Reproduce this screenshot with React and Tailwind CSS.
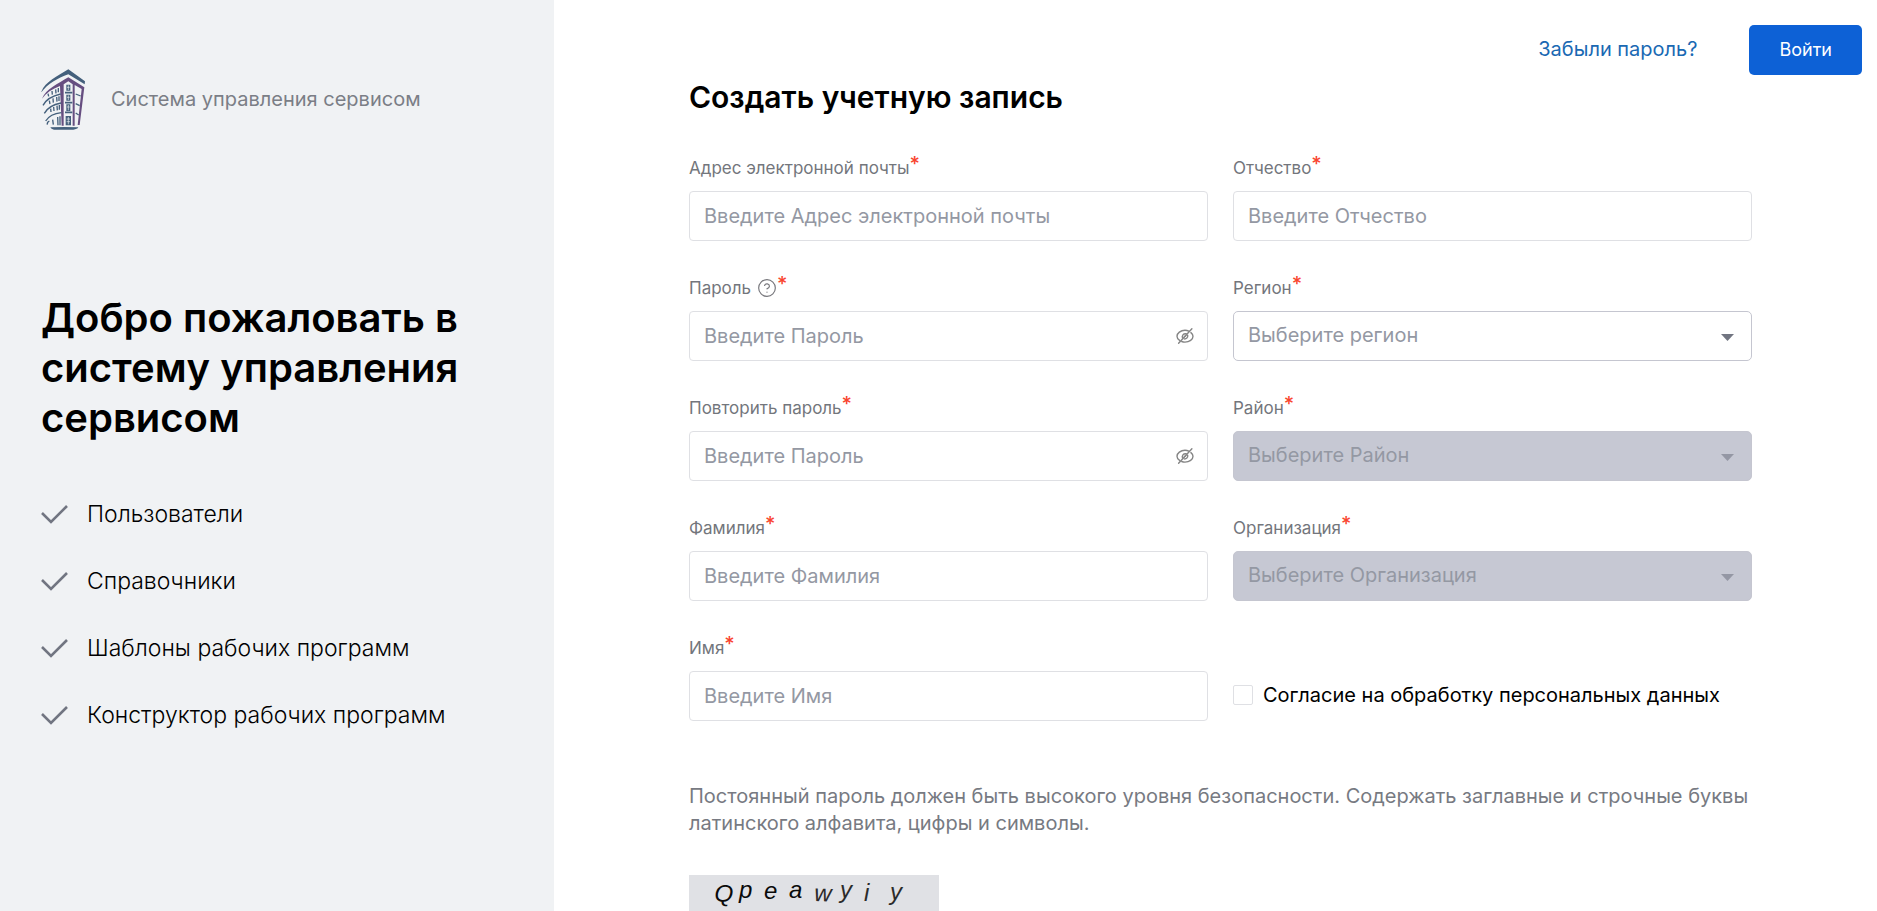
import { CircleHelp } from 'lucide-react';

const features = [
  'Пользователи',
  'Справочники',
  'Шаблоны рабочих программ',
  'Конструктор рабочих программ',
];

const captcha = [
  { char: 'Q', x: 25, y: 26, rotate: 4, fill: '#0a0a0a' },
  { char: 'p', x: 50, y: 23, rotate: 0, fill: '#0a0a0a' },
  { char: 'e', x: 75, y: 24, rotate: 0, fill: '#0a0a0a' },
  { char: 'a', x: 100, y: 23, rotate: 0, fill: '#0a0a0a' },
  { char: 'w', x: 125, y: 26, rotate: 2, fill: '#2b2b2b' },
  { char: 'y', x: 151, y: 23, rotate: 0, fill: '#2b2b2b' },
  { char: 'i', x: 175, y: 26, rotate: 0, fill: '#2b2b2b' },
  { char: 'y', x: 201, y: 25, rotate: 0, fill: '#2b2b2b' },
];

function Logo() {
  return (
    <svg className="h-[62px] w-[46px] shrink-0" viewBox="33 28 138 186" fill="none" aria-hidden="true">
      <path d="M34 96C46 66 82 50 115 29L165 65L164 74L115 44C82 56 54 72 34 98Z" fill="#44607c" />
      <path d="M36 117C48 88 84 72 115 53L163 83L149 196L143 196L155 88L134 76L134 198L128 198L128 74L115 65L101 74L101 198L95 198L90 79C66 88 48 100 36 117Z" fill="#664e80" />
      <g stroke="#44607c" strokeWidth="4">
        <path d="M39 137C50 116 70 108 92 103" />
        <path d="M43 161C54 141 72 134 93 130" />
        <path d="M47 184C57 168 74 161 94 159" />
        <path d="M52 195C51 190 54 186 58 184" />
        <path d="M105 99H127M105 129H127M105 158H127" strokeWidth="5" />
        <path d="M137 103L152 109M137 132L149 138M137 160L146 166" />
        <path d="M56 110L54 102M67 105L66 94M78 101L77 89M85 98V85" />
        <path d="M60 133L58 123M70 129L69 116M81 126L80 112M87 124V110" />
        <path d="M63 157L62 147M72 154L71 142M82 152L81 138M88 150V136" />
        <path d="M70 195L68 180M84 197L83 172M90 197V170" />
      </g>
      <path d="M109 75H121V93H109ZM109 105H121V123H109ZM109 134H121V154H109ZM107 169H123V197H107Z" fill="#44607c" />
      <path d="M115 77V91M111 83H119M115 107V121M111 113H119M115 136V152M111 142H119M115 172V194M110 178H120M110 186H120" stroke="#f0f2f4" strokeWidth="2" />
      <path d="M61 203Q103 201 145 203Q142 209 130 210H72Q63 209 61 203Z" fill="#44607c" />
    </svg>
  );
}

function EyeOff() {
  return (
    <svg className="h-[18px] w-[18px]" viewBox="0 0 18 18" fill="none" stroke="#858585" strokeWidth="1.4" strokeLinecap="round" aria-hidden="true">
      <path d="M3.6 13.4C1.9 12.3 1 10.5 1 9.3C1 6.2 4.6 3.3 9 3.3C10.4 3.3 11.7 3.6 12.8 4.2" />
      <path d="M14.9 5.6C16.3 6.8 17 8.2 17 9.3C17 12.5 13.4 15.1 9 15.1C7.8 15.1 6.7 14.9 5.7 14.5" />
      <path d="M6.6 11.1C5.4 8.7 7.5 6.2 10.2 6.8M11.7 8.3C12.1 10.5 10.3 12.2 8.2 11.9" />
      <path d="M2.6 16.2L15.9 1.8" />
      <path d="M8.4 9.8L9.9 8.4" />
    </svg>
  );
}

function Label({ id, text, help }) {
  return (
    <label htmlFor={id} className="flex h-6 text-[17px] leading-6 text-[#73767c]">
      {text}
      {help && <CircleHelp size={20} strokeWidth={1.4} className="ml-[6px] mt-[2px] text-[#77777c]" />}
      <span className="-mt-1 text-xl font-medium leading-6 text-[#f9442e]">*</span>
    </label>
  );
}

function Field({ id, label, placeholder, type = 'text', help }) {
  return (
    <div className="flex flex-col gap-[11px]">
      <Label id={id} text={label} help={help} />
      <div className="relative">
        <input
          id={id}
          type={type}
          placeholder={placeholder}
          className="h-[50px] w-full rounded-[4px] border border-[#dfe0e4] bg-white px-[14px] text-xl text-black outline-none placeholder:text-[#9498a3]"
        />
        {type === 'password' && (
          <button type="button" aria-label="Показать пароль" className="absolute right-[14px] top-4">
            <EyeOff />
          </button>
        )}
      </div>
    </div>
  );
}

function SelectField({ id, label, placeholder, disabled }) {
  return (
    <div className="flex flex-col gap-[11px]">
      <Label id={id} text={label} />
      <div className="relative">
        <select
          id={id}
          disabled={disabled}
          className="h-[50px] w-full appearance-none rounded-[5px] border border-[#c5c6d0] bg-white px-[14px] pb-[2px] text-xl text-[#9498a3] opacity-100 outline-none disabled:bg-[#c6c8d3]"
        >
          <option>{placeholder}</option>
        </select>
        <svg
          className={`pointer-events-none absolute right-[18px] top-[23px] h-[7px] w-[13px] ${disabled ? 'text-[#9497a4]' : 'text-[#717581]'}`}
          viewBox="0 0 13 7"
          fill="currentColor"
          aria-hidden="true"
        >
          <path d="M0 0H13L6.5 7Z" />
        </svg>
      </div>
    </div>
  );
}

function Sidebar() {
  return (
    <aside className="w-[554px] shrink-0 bg-[#f0f2f4] px-[41px] pt-[69px]">
      <div className="flex items-center gap-6">
        <Logo />
        <span className="pb-[2px] text-xl text-[#7b7e86]">Система управления сервисом</span>
      </div>
      <h1 className="mt-[162px] text-[40px] font-semibold leading-[50px] text-black">
        Добро пожаловать в систему управления сервисом
      </h1>
      <ul className="mt-[58px] flex flex-col gap-10">
        {features.map((item) => (
          <li key={item} className="flex items-center gap-[19px] text-[23px] font-light leading-[27px] text-black">
            <svg className="h-[20px] w-[27px] shrink-0" viewBox="0 0 27 20" fill="none" stroke="#717581" strokeWidth="2.6" aria-hidden="true">
              <path d="M1 8L10 17L26 1" />
            </svg>
            {item}
          </li>
        ))}
      </ul>
    </aside>
  );
}

function App() {
  return (
    <div className="flex min-h-screen bg-white font-['Inter','Noto_Sans',sans-serif]">
      <Sidebar />
      <div className="flex min-w-0 flex-1 flex-col">
        <header className="flex h-[75px] items-end justify-end gap-[52px] pr-[15px]">
          <a href="#forgot" className="flex h-[50px] items-center pb-[2px] text-xl text-[#1a69b3]">
            Забыли пароль?
          </a>
          <button type="button" className="h-[50px] rounded-[5px] bg-[#0d61d6] px-[30px] text-lg text-white">
            Войти
          </button>
        </header>
        <main className="pl-[135px] pr-[125px]">
          <h2 className="text-[30px] font-semibold leading-[44px] text-black">Создать учетную запись</h2>
          <form>
            <div className="mt-[37px] grid grid-cols-2 gap-x-[25px]">
              <div className="flex flex-col gap-[35px]">
                <Field id="email" label="Адрес электронной почты" placeholder="Введите Адрес электронной почты" />
                <Field id="password" label="Пароль" placeholder="Введите Пароль" type="password" help />
                <Field id="repeat" label="Повторить пароль" placeholder="Введите Пароль" type="password" />
                <Field id="surname" label="Фамилия" placeholder="Введите Фамилия" />
                <Field id="name" label="Имя" placeholder="Введите Имя" />
              </div>
              <div className="flex flex-col gap-[35px]">
                <Field id="patronymic" label="Отчество" placeholder="Введите Отчество" />
                <SelectField id="region" label="Регион" placeholder="Выберите регион" />
                <SelectField id="district" label="Район" placeholder="Выберите Район" disabled />
                <SelectField id="organization" label="Организация" placeholder="Выберите Организация" disabled />
                <div className="flex flex-1 items-end">
                  <label className="flex h-[50px] items-center gap-[10px] pb-[2px] text-xl text-black">
                    <input type="checkbox" className="size-5 appearance-none rounded-[2px] border border-[#dfe0e4] bg-white" />
                    Согласие на обработку персональных данных
                  </label>
                </div>
              </div>
            </div>
            <p className="mt-[62px] text-xl leading-[27px] text-[#777a82]">
              Постоянный пароль должен быть высокого уровня безопасности. Содержать заглавные и строчные буквы
              латинского алфавита, цифры и символы.
            </p>
            <svg className="mt-[38px] h-[50px] w-[250px] bg-[#e0e1e5]" viewBox="0 0 250 50" role="img" aria-label="Captcha">
              {captcha.map(({ char, x, y, rotate, fill }) => (
                <text
                  key={x}
                  x={x}
                  y={y}
                  transform={`rotate(${rotate} ${x} ${y})`}
                  fontSize="24"
                  fontStyle="italic"
                  fontFamily="Liberation Sans, sans-serif"
                  fill={fill}
                >
                  {char}
                </text>
              ))}
            </svg>
          </form>
        </main>
      </div>
    </div>
  );
}

export default App;
